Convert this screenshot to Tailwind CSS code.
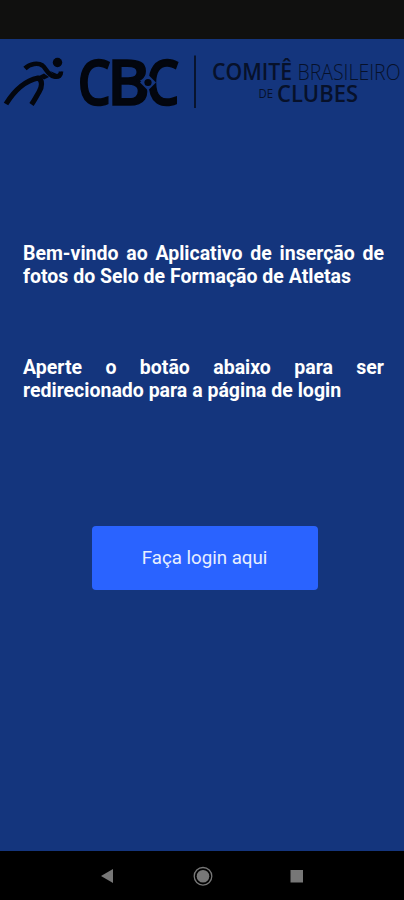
<!DOCTYPE html>
<html lang="pt-BR">
<head>
<meta charset="utf-8">
<meta name="viewport" content="width=device-width, initial-scale=1">
<title>Selo de Formação de Atletas</title>
<script src="https://cdn.jsdelivr.net/npm/@tailwindcss/browser@4"></script>
</head>
<body class="flex h-[900px] w-[404px] flex-col overflow-hidden bg-[#14357d] font-['Roboto',sans-serif]">
  <div class="h-[39px] shrink-0 bg-[#10100f]"></div>
  <header class="h-[80px] shrink-0">
    <svg class="block" width="404" height="80" viewBox="0 39 404 80" role="img" aria-label="Comitê Brasileiro de Clubes">
      <g fill="none" stroke="#03060e" stroke-linejoin="round">
        <path stroke-width="4.600" d="M25 68.500C30 63.500 38 62.500 42.500 65.500C46 68 48 75.500 54 76.500C59 77.500 61 75.500 61 71.500"/>
        <path stroke-width="5.200" d="M6 104C14 91 24 81 38 78C43 80 42 87 39 92C36 97 34 101 31.500 104.500"/>
      </g>
      <path d="M39 76L44 73.500L49 77L44 79.500Z" fill="#03060e"/>
      <path d="M50 71L57 74L62 71.500V76L56 77Z" fill="#03060e"/>
      <circle cx="57.500" cy="62.500" r="4.700" fill="#03060e"/>
      <g fill="#03060e" stroke="#03060e" stroke-width="1.600" font-family="Open Sans" font-weight="600" font-size="64">
        <text x="77.500" y="105" textLength="33.500" lengthAdjust="spacingAndGlyphs">C</text>
        <text x="107" y="105" textLength="43" lengthAdjust="spacingAndGlyphs">B</text>
        <text x="146" y="105" textLength="33.500" lengthAdjust="spacingAndGlyphs">C</text>
      </g>
      <path d="M148 74.500L156 82.500L148 90.500L140 82.500Z" fill="#14357d"/>
      <circle cx="148" cy="82.500" r="3.600" fill="#03060e"/>
      <path d="M195 55.500V108" stroke="#071126" stroke-width="1.800"/>
      <g font-family="Open Sans" fill="#07112a">
        <text x="212" y="80" font-size="22.500" font-weight="600" textLength="80" lengthAdjust="spacingAndGlyphs">COMITÊ</text>
        <text x="297.500" y="80" font-size="22" font-weight="300" textLength="103" lengthAdjust="spacingAndGlyphs">BRASILEIRO</text>
        <text x="258.500" y="98" font-size="12.500" font-weight="400" textLength="14.500" lengthAdjust="spacingAndGlyphs">DE</text>
        <text x="277" y="102" font-size="22.500" font-weight="600" textLength="81" lengthAdjust="spacingAndGlyphs">CLUBES</text>
      </g>
    </svg>
  </header>
  <main class="flex h-[732px] shrink-0 flex-col px-[23px] pt-[123px] text-[19.5px] leading-[23px] text-white">
    <p class="w-[361px] text-justify font-bold">Bem-vindo ao Aplicativo de inserção de fotos do Selo de Formação de Atletas</p>
    <p class="mt-[68px] w-[361px] text-justify font-bold">Aperte o botão abaixo para ser redirecionado para a página de login</p>
    <button class="mt-[124px] ml-[68.5px] h-[64px] w-[226px] rounded-[4px] bg-[#2a63ff] text-[18.7px] text-[#e8efff]">Faça login aqui</button>
  </main>
  <nav class="h-[49px] shrink-0 bg-black">
    <svg class="block" width="404" height="49" viewBox="0 851 404 49" fill="#777">
      <path d="M101 876L113 869V883Z"/>
      <circle cx="203" cy="876.300" r="8.800" fill="none" stroke="#777" stroke-width="1.300"/>
      <circle cx="203" cy="876.300" r="6.300"/>
      <path d="M290.500 870H303V882.500H290.500Z"/>
    </svg>
  </nav>
</body>
</html>
